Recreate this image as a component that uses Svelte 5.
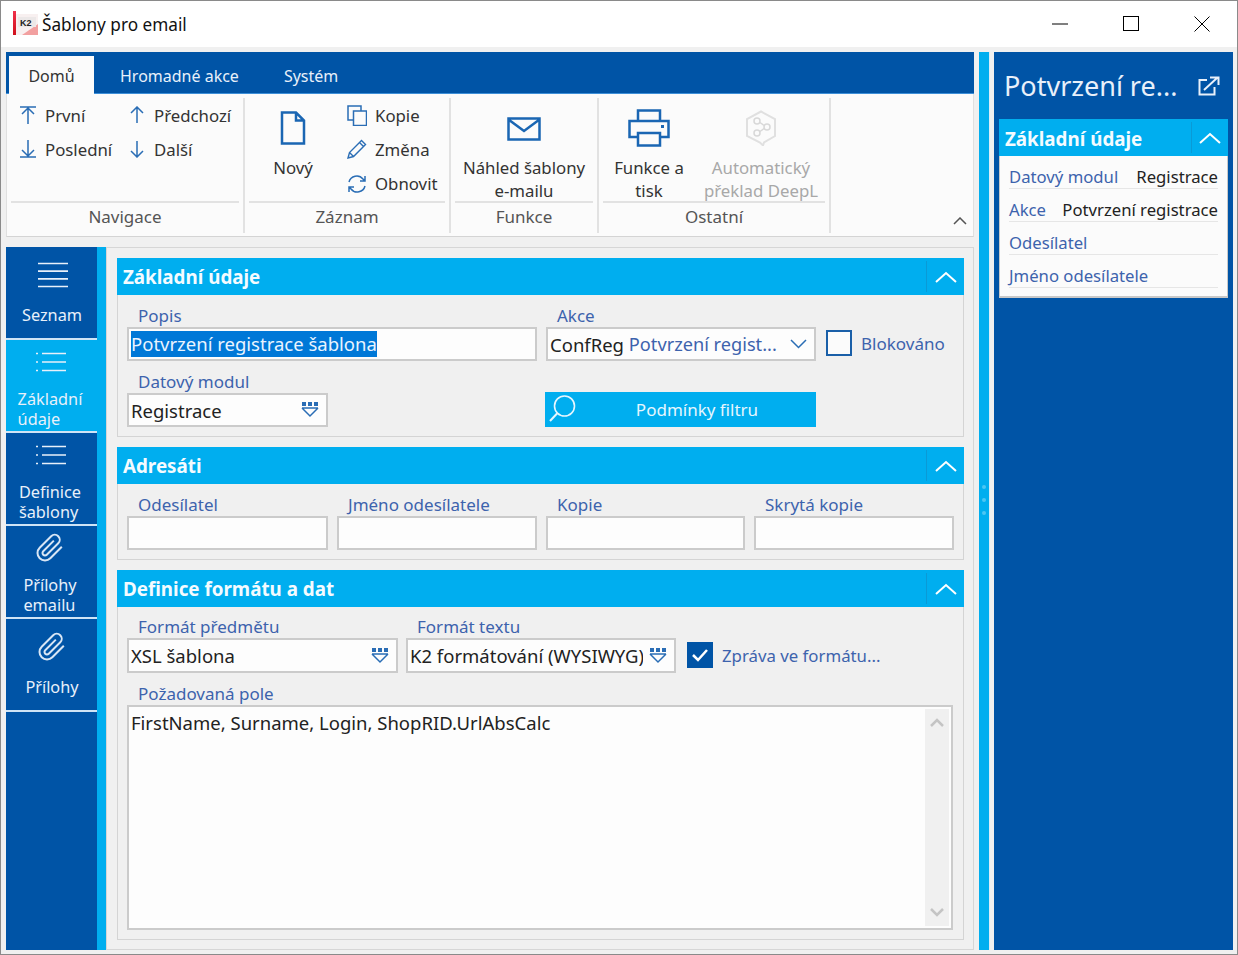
<script>
  const navItems = [
    { lines: ['Seznam'], icon: 'menu' },
    { lines: ['Základní', 'údaje'], icon: 'list', active: true },
    { lines: ['Definice', 'šablony'], icon: 'list' },
    { lines: ['Přílohy', 'emailu'], icon: 'clip' },
    { lines: ['Přílohy'], icon: 'clip' }
  ];
  const adresati = ['Odesílatel', 'Jméno odesílatele', 'Kopie', 'Skrytá kopie'];
  const sideRows = [
    ['Datový modul', 'Registrace'],
    ['Akce', 'Potvrzení registrace'],
    ['Odesílatel', ''],
    ['Jméno odesílatele', '']
  ];
</script>

{#snippet chevUp()}
  <svg class="chev" width="22" height="12" viewBox="0 0 22 12"><path d="M1 11 11 2l10 9" fill="none" stroke="#fff" stroke-width="2"/></svg>
{/snippet}
{#snippet combo()}
  <svg class="combo" width="18" height="16" viewBox="0 0 18 16"><g fill="#2a6db5"><rect x="1" y="0" width="4" height="4"/><rect x="7" y="0" width="4" height="4"/><rect x="13" y="0" width="4" height="4"/></g><path d="M1 6h16M1 6l8 8 8-8" fill="none" stroke="#2a6db5" stroke-width="1.5"/></svg>
{/snippet}
{#snippet head(title)}
  <div class="phead"><span>{title}</span><div class="pchev">{@render chevUp()}</div></div>
{/snippet}

<div class="win">
  <header class="title">
    <svg class="logo" width="26" height="26" viewBox="0 0 26 26">
      <defs><linearGradient id="rb" x1="0" y1="0" x2="0" y2="1"><stop offset="0" stop-color="#f0304a"/><stop offset="1" stop-color="#d0101c"/></linearGradient></defs>
      <rect x="0" y="0" width="3" height="24" fill="url(#rb)"/>
      <rect x="3" y="3" width="22" height="21" fill="#f8f0f0"/>
      <path d="M25 13v11H9z" fill="#f2a0a0"/>
      <rect x="5" y="6" width="18" height="10" fill="#ece8e8"/>
      <text x="7" y="14.5" font-size="9" font-weight="700" fill="#222" font-family="Liberation Sans">K2</text>
    </svg>
    <span class="ttext">Šablony pro email</span>
    <div class="wctl">
      <svg width="16" height="16" viewBox="0 0 16 16"><path d="M0 8h16" stroke="#000"/></svg>
      <svg width="16" height="16" viewBox="0 0 16 16"><rect x=".5" y=".5" width="15" height="14" fill="none" stroke="#000"/></svg>
      <svg width="16" height="16" viewBox="0 0 16 16"><path d="M.5.5l15 15M15.5.5l-15 15" stroke="#000"/></svg>
    </div>
  </header>

  <div class="work">
    <div class="left">
      <section class="ribbon">
        <div class="tabs">
          <div class="tab on">Domů</div>
          <div class="tab t2">Hromadné akce</div>
          <div class="tab t3">Systém</div>
        </div>
        <div class="groups">
          <div class="group g1">
            <div class="gbody nav2">
              <div class="sb c1"><svg width="16" height="18" viewBox="0 0 16 18"><path d="M0 1h16M8 2v16M2 8l6-6 6 6" fill="none" stroke="#2a6db5" stroke-width="1.5"/></svg><span>První</span></div>
              <div class="sb"><svg width="16" height="18" viewBox="0 0 16 18"><path d="M8 1v16M2 7l6-6 6 6" fill="none" stroke="#2a6db5" stroke-width="1.5"/></svg><span>Předchozí</span></div>
              <div class="sb c1"><svg width="16" height="18" viewBox="0 0 16 18"><path d="M0 17h16M8 0v16M2 10l6 6 6-6" fill="none" stroke="#2a6db5" stroke-width="1.5"/></svg><span>Poslední</span></div>
              <div class="sb"><svg width="16" height="18" viewBox="0 0 16 18"><path d="M8 1v16M2 11l6 6 6-6" fill="none" stroke="#2a6db5" stroke-width="1.5"/></svg><span>Další</span></div>
            </div>
            <div class="glabel">Navigace</div>
          </div>
          <div class="group g2">
            <div class="gbody row">
              <div class="bb w90">
                <div class="bicon"><svg width="26" height="34" viewBox="0 0 26 34"><path d="M2 1.500h14l8 8v23H2zM16 1.500v8h8" fill="none" stroke="#1a66b3" stroke-width="2.500"/></svg></div>
                <div class="btxt">Nový</div>
              </div>
              <div class="col3">
                <div class="sb"><svg width="20" height="21" viewBox="0 0 20 21"><path d="M6 15H1V1h13v5" fill="none" stroke="#2a6db5" stroke-width="1.5"/><rect x="6.5" y="6" width="13" height="14.500" fill="none" stroke="#2a6db5" stroke-width="1.500"/></svg><span>Kopie</span></div>
                <div class="sb"><svg width="20" height="20" viewBox="0 0 20 20"><path d="M1 19l1.500-5.500L14.500 1.500l4 4-12 12zM12.500 3.500l4 4M2.500 13.500l4 4" fill="none" stroke="#2a6db5" stroke-width="1.400"/></svg><span>Změna</span></div>
                <div class="sb"><svg width="20" height="20" viewBox="0 0 20 20"><path d="M2 8a8 8 0 0 1 14-3l2 2M18 2v5h-5M18 12a8 8 0 0 1-14 3l-2-2M2 18v-5h5" fill="none" stroke="#2a6db5" stroke-width="1.500"/></svg><span>Obnovit</span></div>
              </div>
            </div>
            <div class="glabel">Záznam</div>
          </div>
          <div class="group g3">
            <div class="gbody row">
              <div class="bb full">
                <div class="bicon"><svg class="mail" width="34" height="24" viewBox="0 0 34 24"><path d="M1.500 1.500h31v21h-31zM1.500 2.500 17 14 32.500 2.500" fill="none" stroke="#1a66b3" stroke-width="2.500"/></svg></div>
                <div class="btxt">Náhled šablony<br/>e-mailu</div>
              </div>
            </div>
            <div class="glabel">Funkce</div>
          </div>
          <div class="group g4">
            <div class="gbody row">
              <div class="bb wf">
                <div class="bicon"><svg width="42" height="38" viewBox="0 0 42 38"><path d="M10 12V1.500h22V12M10 28H1.500V12h39v16H32" fill="none" stroke="#1a66b3" stroke-width="2.500"/><rect x="10" y="24" width="22" height="12.500" fill="none" stroke="#1a66b3" stroke-width="2.500"/><rect x="33" y="16" width="3" height="3" fill="#1a66b3"/></svg></div>
                <div class="btxt">Funkce a<br/>tisk</div>
              </div>
              <div class="bb wa">
                <div class="bicon"><svg width="32" height="36" viewBox="0 0 32 36"><path d="M16 1.500 30 9v17l-11 6.500-1 3-3-3L2 26V9z" fill="none" stroke="#e0e0e0" stroke-width="2"/><g fill="none" stroke="#d8d8d8" stroke-width="1.500"><circle cx="12" cy="11" r="3"/><circle cx="22" cy="17" r="3"/><circle cx="12" cy="23" r="3"/><path d="M15 12.500l4 3M19 18.500l-4 3"/></g></svg></div>
                <div class="btxt dis">Automatický<br/>překlad DeepL</div>
              </div>
            </div>
            <div class="glabel">Ostatní</div>
          </div>
          <svg class="rcol" width="14" height="8" viewBox="0 0 14 8"><path d="M1 7l6-6 6 6" fill="none" stroke="#555" stroke-width="1.500"/></svg>
        </div>
      </section>

      <div class="lower">
        <nav class="lnav">
          {#each navItems as it}
            <div class="nitem" class:active={it.active} class:two={it.lines.length > 1}>
              <div class="nicon">
                {#if it.icon === 'menu'}
                  <svg width="31" height="26" viewBox="0 0 31 26"><path d="M1 1.500h30M1 9.200h30M1 16.800h30M1 24.500h30" stroke="#e8f0fa" stroke-width="1.700"/></svg>
                {:else if it.icon === 'list'}
                  <svg width="31" height="20" viewBox="0 0 31 20"><path d="M7 1.500h24M7 10h24M7 18.500h24" stroke="#e8f0fa" stroke-width="1.700"/><path d="M1 1.500h2M1 10h2M1 18.500h2" stroke="#e8f0fa" stroke-width="1.700"/></svg>
                {:else}
                  <svg width="30" height="30" viewBox="0 0 24 24"><path d="M21.440 11.050l-9.190 9.190a6 6 0 0 1-8.490-8.490l9.190-9.190a4 4 0 0 1 5.660 5.660l-9.200 9.190a2 2 0 0 1-2.830-2.830l8.490-8.480" fill="none" stroke="#d8e6f5" stroke-width="1.600"/></svg>
                {/if}
              </div>
              <div class="ntext">{#each it.lines as l}<div>{l}</div>{/each}</div>
            </div>
          {/each}
        </nav>
        <div class="strip"></div>
        <div class="form">
          <section class="panel p1">
            {@render head('Základní údaje')}
            <div class="pbody grid1">
              <div class="field">
                <label>Popis</label>
                <div class="inp"><span class="sel">Potvrzení registrace šablona</span></div>
              </div>
              <div class="field">
                <label>Akce</label>
                <div class="inp"><span class="ink">ConfReg</span>&nbsp;<span class="link">Potvrzení regist...</span>
                  <svg class="akchev" width="17" height="10" viewBox="0 0 17 10"><path d="M1 1l7.500 7.500L16 1" fill="none" stroke="#2a6db5" stroke-width="1.500"/></svg>
                </div>
              </div>
              <div class="check ck1"><span class="box"></span><span class="link">Blokováno</span></div>
              <div class="field mod">
                <label>Datový modul</label>
                <div class="inp"><span class="ink">Registrace</span>{@render combo()}</div>
              </div>
              <div class="btn">
                <svg width="30" height="30" viewBox="0 0 30 30"><circle cx="17.500" cy="12" r="10" fill="none" stroke="#e6f6fe" stroke-width="1.600"/><path d="M10.500 19 3 27" stroke="#e6f6fe" stroke-width="2"/></svg>
                <span>Podmínky filtru</span>
              </div>
            </div>
          </section>

          <section class="panel p2">
            {@render head('Adresáti')}
            <div class="pbody grid2">
              {#each adresati as a}
                <div class="field"><label>{a}</label><div class="inp"></div></div>
              {/each}
            </div>
          </section>

          <section class="panel p3">
            {@render head('Definice formátu a dat')}
            <div class="pbody grid3">
              <div class="field">
                <label>Formát předmětu</label>
                <div class="inp tall"><span class="ink">XSL šablona</span>{@render combo()}</div>
              </div>
              <div class="field">
                <label>Formát textu</label>
                <div class="inp tall"><span class="ink clipt">K2 formátování (WYSIWYG)</span>{@render combo()}</div>
              </div>
              <div class="check ck3">
                <span class="box on"><svg width="18" height="16" viewBox="0 0 18 16"><path d="M2 8l5 5 9-10" fill="none" stroke="#fff" stroke-width="2.500"/></svg></span>
                <span class="link">Zpráva ve formátu...</span>
              </div>
              <div class="field wide">
                <label>Požadovaná pole</label>
                <div class="area">
                  <span class="ink">FirstName, Surname, Login, ShopRID.UrlAbsCalc</span>
                  <div class="sbar">
                    <svg width="14" height="9" viewBox="0 0 14 9"><path d="M1 8l6-6 6 6" fill="none" stroke="#c4c4c4" stroke-width="2.500"/></svg>
                    <svg width="14" height="9" viewBox="0 0 14 9"><path d="M1 1l6 6 6-6" fill="none" stroke="#c4c4c4" stroke-width="2.500"/></svg>
                  </div>
                </div>
              </div>
            </div>
          </section>
        </div>
      </div>
    </div>

    <div class="split"><i></i><i></i><i></i></div>

    <aside class="side">
      <div class="stitle">
        <span>Potvrzení re...</span>
        <svg width="22" height="20" viewBox="0 0 22 20"><path d="M9 4H1.500v14.500h15V11" fill="none" stroke="#e8f0fa" stroke-width="2"/><path d="M6 14 19 2M12 1.500h8.500V9" fill="none" stroke="#e8f0fa" stroke-width="2"/></svg>
      </div>
      <div class="sec">
        <div class="shead"><span>Základní údaje</span><div class="schev">{@render chevUp()}</div></div>
        <div class="sbody">
          {#each sideRows as r}
            <div class="srow"><span class="link">{r[0]}</span><span class="ink">{r[1]}</span></div>
          {/each}
        </div>
      </div>
    </aside>
  </div>
</div>

<style>
  :global(body) { margin: 0; background: #f0f0f0; }
  .win {
    box-sizing: border-box; width: 1238px; height: 955px;
    border: 1px solid #8a8a8a; background: #f0f0f0;
    display: flex; flex-direction: column; overflow: hidden;
    font-family: "Noto Sans", "Open Sans", sans-serif; font-size: 17px; color: #333;
  }
  .title { height: 46px; flex: none; background: #fff; display: flex; align-items: center; padding-left: 12px; }
  .ttext { margin-left: 3px; font-size: 17.200px; color: #111; }
  .wctl { margin-left: auto; display: flex; gap: 55px; padding-right: 27px; }
  .work { flex: 1; min-height: 0; display: flex; padding: 5px 4px 4px 5px; }
  .left { width: 968px; flex: none; display: flex; flex-direction: column; }

  .ribbon { height: 185px; flex: none; background: #fbfbfb; border-bottom: 1px solid #d4d4d4; box-sizing: border-box; display: flex; flex-direction: column; border-left: 1px solid #e0e0e0; border-right: 1px solid #e0e0e0; }
  .tabs { height: 42px; flex: none; background: #0054a6; display: flex; align-items: flex-end; box-sizing: border-box; padding-left: 2px; border-bottom: 1px solid #3d8fd8; margin: 0 -1px; }
  .tab { height: 37px; line-height: 40px; color: #e8f0fa; font-size: 16px; }
  .tab.on { background: #fbfbfb; color: #333; width: 85px; text-align: center; margin-left: 1px; height: 38px; margin-bottom: -1px; }
  .t2 { margin-left: 26px; }
  .t3 { margin-left: 45px; }
  .groups { flex: 1; display: flex; padding: 4px 0 3px; min-height: 0; }
  .group { display: flex; flex-direction: column; border-right: 2px solid #e2e2e2; box-sizing: border-box; }
  .g1 { width: 238px; }
  .g2 { width: 206px; }
  .g3 { width: 148px; }
  .g4 { width: 232px; }
  .gbody { height: 103px; flex: none; overflow: visible; }
  .glabel { flex: 1; margin: 0 4px; border-top: 2px solid #e2e2e2; text-align: center; color: #555; font-size: 17px; line-height: 28px; }
  .row { display: flex; }
  .nav2 { display: grid; grid-template-columns: 109px 1fr; grid-auto-rows: 34px; padding: 0 0 0 13px; }
  .sb { display: flex; align-items: center; gap: 9px; height: 34px; white-space: nowrap; font-size: 16.800px; }
  .sb svg { flex: none; }
  .col3 { display: flex; flex-direction: column; padding: 0 0 0 9px; }
  .col3 .sb { gap: 8px; height: 34.500px; }
  .bb { display: flex; flex-direction: column; align-items: center; flex: none; }
  .bicon { height: 58px; flex: none; display: flex; align-items: center; justify-content: center; padding-top: 1px; margin-bottom: -1px; }
  .mail { margin-top: 2px; }
  .btxt { text-align: center; line-height: 23px; font-size: 16.800px; white-space: nowrap; }
  .dis { color: #a8a8a8; }
  .w90 { width: 90px; margin-left: 3px; }
  .full { width: 100%; }
  .wf { width: 96px; margin-left: 2px; }
  .wa { width: 128px; }
  .rcol { align-self: flex-end; margin: 0 0 8px 122px; }

  .lower { flex: 1; min-height: 0; margin-top: 10px; display: flex; }
  .lnav { width: 91px; flex: none; background: #0054a6; display: flex; flex-direction: column; }
  .nitem { height: 91px; flex: none; border-bottom: 2px solid #cfe4f6; color: #e8f0fa; display: flex; flex-direction: column; align-items: center; }
  .nitem.active { background: #00aeef; }
  .nitem.two { padding-right: 3px; box-sizing: border-box; height: 93px; }
  .nicon { height: 55px; margin-bottom: 3px; display: flex; align-items: center; justify-content: center; flex: none; }
  .two .nicon { height: 44px; margin-bottom: 5px; }
  .nitem:not(.two) { padding-left: 1px; }
  .ntext { font-size: 16.300px; line-height: 20px; text-align: left; }
  .strip { width: 9px; flex: none; background: #00aeef; }
  .form { flex: 1; min-width: 0; border: 1px solid #d6d6d6; box-sizing: border-box; padding: 10px 9px 9px 10px; display: flex; flex-direction: column; gap: 10px; }

  .panel { display: flex; flex-direction: column; flex: none; }
  .p3 { flex: 1; min-height: 0; }
  .phead { height: 37px; flex: none; background: #00aeef; color: #f4fbff; display: flex; align-items: center; justify-content: space-between; padding-left: 6px; font-weight: 700; font-size: 18.800px; }
  .pchev { width: 37px; height: 31px; border-left: 1px solid #0a9ad6; display: flex; align-items: center; justify-content: center; }
  .pbody { flex: 1; border: 1px solid #d4d4d4; border-top: 0; padding: 10px 9px 9px 9px; display: grid; column-gap: 9px; }
  .grid1 { grid-template-columns: 410px 270px 1fr; row-gap: 10px; }
  .grid2 { grid-template-columns: 201px 200px 199px 200px; }
  .grid3 { grid-template-columns: 271px 270px 1fr; column-gap: 8px; row-gap: 10px; padding-top: 9px; grid-template-rows: auto 1fr; }
  .field { display: flex; flex-direction: column; min-width: 0; }
  .field label { display: block; height: 22px; line-height: 22px; padding-left: 11px; color: #3d63ad; font-size: 17px; white-space: nowrap; }
  .inp { height: 34px; box-sizing: border-box; border: 2px solid #cbcbcb; background: #fdfdfd; display: flex; align-items: center; padding-left: 2px; white-space: nowrap; font-size: 18.500px; }
  .tall { height: 35px; }
  .ink { color: #222; }
  .link { color: #3d63ad; }
  .sel { background: #0078d7; color: #eaf4ff; line-height: 26px; height: 26px; display: block; }
  .inp .link { font-size: 18.200px; }
  .akchev { margin-left: auto; margin-right: 7px; flex: none; }
  .combo { margin-left: auto; margin-right: 7px; flex: none; }
  .clipt { overflow: hidden; flex: 1; min-width: 0; margin-right: 6px; }
  .check { display: flex; align-items: center; white-space: nowrap; align-self: end; height: 34px; font-size: 17px; margin-bottom: 1px; }
  .ck1 { margin-left: 1px; gap: 9px; }
  .ck3 { margin-left: 3px; gap: 9px; font-size: 16.800px; }
  .box { width: 26px; height: 26px; box-sizing: border-box; border: 2px solid #1a5fa8; background: #fbfbfb; flex: none; display: flex; align-items: center; justify-content: center; }
  .box.on { background: #0054a6; border-color: #0054a6; }
  .mod { width: 201px; }
  .btn { grid-column: 2; height: 35px; align-self: end; margin-left: -1px; background: #00aeef; color: #e6f6fe; display: flex; align-items: center; position: relative; justify-content: center; padding-left: 33px; box-sizing: border-box; font-size: 17px; }
  .btn svg { position: absolute; left: 2px; top: 2px; }
  .wide { grid-column: 1 / -1; min-height: 0; margin-right: 1px; }
  .area { flex: 1; min-height: 0; box-sizing: border-box; border: 2px solid #cbcbcb; background: #fdfdfd; display: flex; justify-content: space-between; padding: 2px; font-size: 18.500px; }
  .area .ink { line-height: 27px; }
  .sbar { width: 24px; background: #f0f0f0; display: flex; flex-direction: column; align-items: center; justify-content: space-between; padding: 9px 0; box-sizing: border-box; }

  .split { width: 11px; flex: none; margin-left: 5px; background: #00aeef; display: flex; flex-direction: column; align-items: center; gap: 9px; padding-top: 433px; box-sizing: border-box; border-right: 1px solid #d8ecf8; }
  .split i { width: 4px; height: 4px; border-radius: 50%; background: #4cc6f3; display: block; }
  .side { width: 239px; flex: none; margin-left: 4px; background: #0054a6; box-sizing: border-box; padding: 0 5px; }
  .stitle { height: 67px; display: flex; align-items: center; justify-content: space-between; color: #e8f0fa; font-size: 27px; padding: 0 8px 0 5px; box-sizing: border-box; }
  .sec { background: #fbfbfb; }
  .shead { height: 37px; background: #00aeef; color: #f4fbff; display: flex; align-items: center; justify-content: space-between; padding-left: 6px; font-weight: 700; font-size: 18.800px; }
  .shead span { padding-top: 2px; }
  .schev { width: 36px; height: 31px; border-left: 1px solid #0a9ad6; display: flex; align-items: center; justify-content: center; }
  .sbody { height: 142px; box-sizing: border-box; padding: 0 9px 0 9px; border: 1px solid #c8c8c8; border-top: 0; border-bottom-width: 2px; }
  .srow { height: 33px; box-sizing: border-box; border-bottom: 1px solid #e6e6e6; display: flex; align-items: center; justify-content: space-between; font-size: 16.700px; padding-top: 9px; white-space: nowrap; }
</style>
